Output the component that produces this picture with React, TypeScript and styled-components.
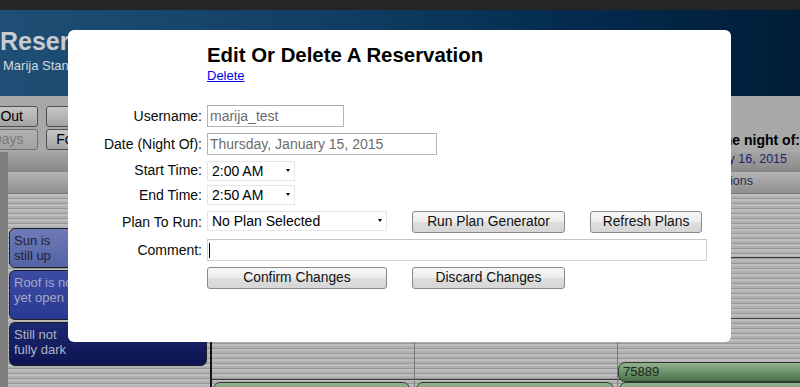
import React from "react";
import styled, { createGlobalStyle, css } from "styled-components";

const FONT = `"Liberation Sans", Arial, Helvetica, sans-serif`;

const GlobalStyle = createGlobalStyle`
  *, *::before, *::after { box-sizing: border-box; }
  html, body { margin: 0; padding: 0; background: #a8a8a8; }
  body { font-family: ${FONT}; overflow: hidden; }
`;

const Page = styled.div`
  position: relative;
  width: 800px;
  height: 387px;
  overflow: hidden;
  display: flex;
  flex-direction: column;
  background: #a8a8a8;
  font-family: ${FONT};
`;

const TopStrip = styled.div`
  flex: none;
  height: 10px;
  background: #252525;
`;

const Header = styled.header`
  flex: none;
  height: 86px;
  padding-top: 17px;
  background: linear-gradient(to right, #1f4f76 0%, #0f3c62 45%, #03294b 75%, #001d38 100%);
`;

const SiteTitle = styled.h1`
  margin: 0;
  font-size: 25px;
  line-height: 29px;
  font-weight: 700;
  color: #c8ccd1;
  white-space: nowrap;
`;

const SiteUser = styled.div`
  margin-top: 2px;
  padding-left: 3px;
  font-size: 13px;
  line-height: 16px;
  color: #d6d9dc;
  white-space: nowrap;
`;

const Board = styled.div`
  flex: 1;
  min-height: 0;
  display: grid;
  grid-template-columns: 8px 204px 202px 203px minmax(0, 1fr);
  grid-template-rows: 56px 20px 22px minmax(0, 1fr);
`;

const Toolbar = styled.div`
  grid-column: 1 / 3;
  grid-row: 1;
  margin-left: -56px;
  padding-top: 10px;
  display: grid;
  grid-template-columns: 94px auto;
  grid-auto-rows: 21px;
  column-gap: 8px;
  row-gap: 2px;
  align-content: start;
  justify-items: start;
`;

const ToolButton = styled.button<{ $align: "end" | "center"; $width: number }>`
  width: ${(p) => p.$width}px;
  height: 21px;
  margin: 0;
  padding: 0 ${(p) => (p.$align === "end" ? "14px" : "0")} 0 0;
  border: 1px solid #505050;
  border-radius: 3px;
  background: linear-gradient(#c6c6c6, #a3a3a3);
  font-family: ${FONT};
  font-size: 14px;
  line-height: 19px;
  color: #000;
  text-align: ${(p) => (p.$align === "end" ? "right" : "center")};
  white-space: nowrap;
  overflow: hidden;
  &:disabled {
    border-color: #707070;
    background: linear-gradient(#b2b2b2, #a2a2a2);
    color: #7a7a7a;
  }
`;

const DayTitle = styled.div`
  grid-row: 1;
  min-width: 0;
  display: flex;
  justify-content: flex-end;
  align-items: flex-end;
  padding-bottom: 4px;
  font-size: 14px;
  line-height: 16px;
  font-weight: 700;
  color: #000;
  white-space: nowrap;
`;

const LeftStrip = styled.div`
  grid-column: 1;
  grid-row: 2 / 5;
  background: #7d7d7d;
`;

const HeadCell = styled.div<{ $row: "date" | "count" }>`
  grid-row: ${(p) => (p.$row === "date" ? 2 : 3)};
  min-width: 0;
  display: flex;
  justify-content: flex-end;
  align-items: flex-start;
  padding-top: ${(p) => (p.$row === "date" ? "0" : "2px")};
  padding-right: ${(p) => (p.$row === "date" ? "13px" : "47px")};
  font-size: 12.5px;
  line-height: 15px;
  white-space: nowrap;
  color: ${(p) => (p.$row === "date" ? "#23236a" : "#2c2c55")};
  background: ${(p) =>
    p.$row === "date"
      ? "linear-gradient(#a3a3a3, #8b8b8b)"
      : "linear-gradient(#b4b4b4, #8e8e8e)"};
  border-bottom: 1px solid ${(p) => (p.$row === "date" ? "#838383" : "#7a7a7a")};
`;

const stripes = css`
  background-color: #b6b6b6;
  background-image: repeating-linear-gradient(
    to bottom,
    #bebebe 0px,
    #bebebe 2px,
    #b1b1b1 2px,
    #b1b1b1 4px,
    #989898 4px,
    #989898 5px
  );
`;

const Lane = styled.div<{ $edge: "none" | "light" | "event" }>`
  grid-row: 4;
  position: relative;
  min-width: 0;
  overflow: hidden;
  ${stripes};
  border-left: ${(p) => (p.$edge === "light" ? "1px solid #7a7a7a" : "0")};
  border-right: ${(p) => (p.$edge === "event" ? "2px solid #161616" : "0")};
`;

const HourLine = styled.div`
  position: absolute;
  left: 0;
  right: 0;
  height: 1px;
  background: #3d3d3d;
`;

const toneStyles = {
  dusk: css`
    background: linear-gradient(#6f7bb8, #5363a6);
    color: #1e2233;
  `,
  roof: css`
    background: linear-gradient(#3c4ca3, #2a3a92);
    color: #a3a8c8;
  `,
  night: css`
    background: linear-gradient(#1c2872, #0d1550);
    color: #b0b3c4;
  `,
};

const EventBlock = styled.div<{ $tone: keyof typeof toneStyles }>`
  position: absolute;
  left: 1px;
  right: 3px;
  padding: 4px 4px;
  border: 1px solid #1e1e28;
  border-radius: 6px;
  font-size: 13px;
  line-height: 15px;
  white-space: pre-line;
  overflow: hidden;
  ${(p) => toneStyles[p.$tone]};
  &::before {
    content: "";
    position: absolute;
    left: -1px;
    top: -4px;
    border-left: 4px solid #d8d8d8;
    border-top: 3px solid transparent;
    border-bottom: 3px solid transparent;
  }
`;

const ResBlock = styled.div`
  position: absolute;
  padding: 0 4px;
  border: 1px solid #2a3a2a;
  border-radius: 7px;
  background: linear-gradient(#93b08f, #6d916a 50%, #46704a);
  font-size: 13px;
  line-height: 18px;
  color: #1b2a1b;
  white-space: nowrap;
  overflow: hidden;
`;

/* ---------- modal ---------- */

const Modal = styled.section`
  position: absolute;
  left: 68px;
  top: 30px;
  width: 663px;
  height: 312px;
  padding-top: 14px;
  background: #fff;
  border-radius: 6px;
  display: grid;
  grid-template-columns: 134px 1fr;
  column-gap: 5px;
  align-content: start;
  font-family: ${FONT};
`;

const Heading = styled.div`
  grid-column: 2;
  display: flex;
  flex-direction: column;
  align-items: flex-start;
`;

const ModalTitle = styled.h2`
  margin: 0;
  font-size: 20.4px;
  line-height: 23px;
  font-weight: 700;
  color: #000;
  white-space: nowrap;
`;

const DeleteLink = styled.a`
  display: block;
  margin-top: 1px;
  font-size: 13px;
  line-height: 15px;
  color: #0000ee;
  text-decoration: underline;
`;

const Form = styled.form`
  grid-column: 1 / 3;
  margin: 22px 0 0;
  display: grid;
  grid-template-columns: 134px 1fr;
  grid-template-rows: 22px 22px 18px 20px 22px 22px 22px;
  column-gap: 5px;
  row-gap: 6px;
`;

const Label = styled.label`
  align-self: center;
  text-align: right;
  font-size: 14px;
  line-height: 16px;
  color: #0a0a0a;
  white-space: nowrap;
`;

const FieldCell = styled.div`
  position: relative;
  display: flex;
  align-items: flex-start;
  gap: 25px;
`;

const TextField = styled.input<{ $width: number; $soft?: boolean }>`
  width: ${(p) => p.$width}px;
  height: 22px;
  margin: 0;
  padding: 0 2px;
  border: 1px solid ${(p) => (p.$soft ? "#d2d2d2" : "#b5b5b5")};
  border-top-color: ${(p) => (p.$soft ? "#c6c6c6" : "#adadad")};
  border-radius: 0;
  background: #fff;
  font-family: ${FONT};
  font-size: 14px;
  color: #6c6c6c;
  outline: none;
`;

const TextCaret = styled.span`
  position: absolute;
  left: 2px;
  top: 4px;
  width: 1px;
  height: 15px;
  background: #000;
`;

const SelectWrap = styled.div<{ $width: number }>`
  position: relative;
  flex: none;
  width: ${(p) => p.$width}px;
  height: 20px;
  &::after {
    content: "";
    position: absolute;
    right: 5px;
    top: 8px;
    border-left: 2.5px solid transparent;
    border-right: 2.5px solid transparent;
    border-top: 3px solid #000;
    pointer-events: none;
  }
`;

const Select = styled.select`
  appearance: none;
  -webkit-appearance: none;
  width: 100%;
  height: 100%;
  margin: 0;
  padding: 0 0 0 4px;
  border: 1px solid #e6e6e6;
  border-radius: 0;
  background: #fff;
  font-family: ${FONT};
  font-size: 14px;
  line-height: 18px;
  color: #000;
  outline: none;
`;

const ActionButton = styled.button<{ $width: number }>`
  flex: none;
  width: ${(p) => p.$width}px;
  height: 22px;
  margin: 0;
  padding: 0;
  border: 1px solid #8a8a8a;
  border-radius: 3px;
  background: linear-gradient(#f7f7f7 0%, #ededed 48%, #dfdfdf 52%, #d5d5d5 100%);
  font-family: ${FONT};
  font-size: 13.8px;
  line-height: 20px;
  color: #111;
  white-space: nowrap;
`;

/* ---------- data ---------- */

const days = [
  { title: "Reservations for the night of:", date: "Wednesday, January 14, 2015", count: "1 Reservation" },
  { title: "Reservations for the night of:", date: "Thursday, January 15, 2015", count: "1 Reservation" },
  { title: "Reservations for the night of:", date: "Friday, January 16, 2015", count: "2 Reservations" },
];

const hourMarks = [63, 124, 185];

const twilight: { top: number; height: number; text: string; tone: keyof typeof toneStyles }[] = [
  { top: 34, height: 40, text: "Sun is\nstill up", tone: "dusk" },
  { top: 76, height: 50, text: "Roof is not\nyet open", tone: "roof" },
  { top: 128, height: 44, text: "Still not\nfully dark", tone: "night" },
];

const reservations: { top: number; height: number; left: number; right: number; text: string }[][] = [
  [{ top: 188, height: 30, left: 1, right: 4, text: "" }],
  [{ top: 188, height: 30, left: 1, right: 3, text: "" }],
  [
    { top: 168, height: 20, left: 0, right: -10, text: "75889" },
    { top: 188, height: 30, left: 1, right: -10, text: "" },
  ],
];

export default function App() {
  return (
    <>
      <GlobalStyle />
      <Page>
        <TopStrip />
        <Header>
          <SiteTitle>Reservation Calendar</SiteTitle>
          <SiteUser>Marija Stanojevic</SiteUser>
        </Header>
        <Board>
          <Toolbar>
            <ToolButton $align="end" $width={94}>
              Zoom Out
            </ToolButton>
            <ToolButton $align="center" $width={122}>
              Zoom In
            </ToolButton>
            <ToolButton $align="end" $width={94} disabled>
              Back 3 Days
            </ToolButton>
            <ToolButton $align="center" $width={72}>
              Forward
            </ToolButton>
          </Toolbar>
          {days.map((d) => (
            <DayTitle key={d.date}>
              <span>{d.title}</span>
            </DayTitle>
          ))}
          <LeftStrip />
          <HeadCell $row="date" />
          {days.map((d) => (
            <HeadCell $row="date" key={d.date}>
              <span>{d.date}</span>
            </HeadCell>
          ))}
          <HeadCell $row="count" />
          {days.map((d) => (
            <HeadCell $row="count" key={d.date}>
              <span>{d.count}</span>
            </HeadCell>
          ))}
          <Lane $edge="event">
            {twilight.map((b) => (
              <EventBlock key={b.text} $tone={b.tone} style={{ top: b.top, height: b.height }}>
                {b.text}
              </EventBlock>
            ))}
          </Lane>
          {days.map((d, i) => (
            <Lane key={d.date} $edge={i === 0 ? "none" : "light"}>
              {hourMarks.map((m) => (
                <HourLine key={m} style={{ top: m }} />
              ))}
              {reservations[i].map((r) => (
                <ResBlock
                  key={r.top}
                  style={{ top: r.top, height: r.height, left: r.left, right: r.right }}
                >
                  {r.text}
                </ResBlock>
              ))}
            </Lane>
          ))}
        </Board>

        <Modal>
          <Heading>
            <ModalTitle>Edit Or Delete A Reservation</ModalTitle>
            <DeleteLink href="#">Delete</DeleteLink>
          </Heading>
          <Form onSubmit={(e) => e.preventDefault()}>
            <Label>Username:</Label>
            <FieldCell>
              <TextField $width={137} defaultValue="marija_test" readOnly />
            </FieldCell>

            <Label>Date (Night Of):</Label>
            <FieldCell>
              <TextField $width={230} defaultValue="Thursday, January 15, 2015" readOnly />
            </FieldCell>

            <Label>Start Time:</Label>
            <FieldCell>
              <SelectWrap $width={88}>
                <Select defaultValue="2:00 AM">
                  <option>2:00 AM</option>
                </Select>
              </SelectWrap>
            </FieldCell>

            <Label>End Time:</Label>
            <FieldCell>
              <SelectWrap $width={88}>
                <Select defaultValue="2:50 AM">
                  <option>2:50 AM</option>
                </Select>
              </SelectWrap>
            </FieldCell>

            <Label>Plan To Run:</Label>
            <FieldCell>
              <SelectWrap $width={180}>
                <Select defaultValue="No Plan Selected">
                  <option>No Plan Selected</option>
                </Select>
              </SelectWrap>
              <ActionButton type="button" $width={153}>
                Run Plan Generator
              </ActionButton>
              <ActionButton type="button" $width={112}>
                Refresh Plans
              </ActionButton>
            </FieldCell>

            <Label>Comment:</Label>
            <FieldCell>
              <TextField $width={500} $soft defaultValue="" />
              <TextCaret />
            </FieldCell>

            <span />
            <FieldCell>
              <ActionButton type="button" $width={180}>
                Confirm Changes
              </ActionButton>
              <ActionButton type="button" $width={153}>
                Discard Changes
              </ActionButton>
            </FieldCell>
          </Form>
        </Modal>
      </Page>
    </>
  );
}
